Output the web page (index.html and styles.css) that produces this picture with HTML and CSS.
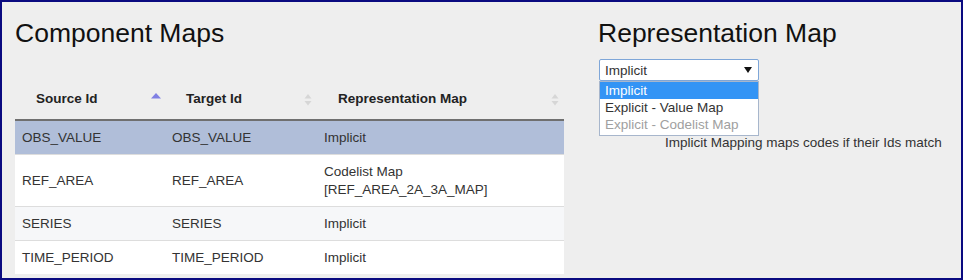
FILE: index.html
```html
<!DOCTYPE html>
<html>
<head>
<meta charset="utf-8">
<link rel="stylesheet" href="styles.css">
</head>
<body>
<div class="frame">
  <section class="left">
    <h2 class="title">Component Maps</h2>
    <table class="maps">
      <colgroup><col class="c1"><col class="c2"><col class="c3"></colgroup>
      <thead>
        <tr>
          <th><div class="th-in"><span>Source Id</span>
            <svg class="sort" width="10" height="14" viewBox="0 0 10 14"><polygon points="0,5.5 5,0 10,5.5" fill="#7f7fe3"/></svg></div></th>
          <th><div class="th-in"><span>Target Id</span>
            <svg class="sort" width="10" height="14" viewBox="0 0 10 14"><polygon points="1.5,5.5 5,1 8.5,5.5" fill="#d6d6d6"/><polygon points="1.5,8 5,12.5 8.5,8" fill="#d6d6d6"/></svg></div></th>
          <th><div class="th-in"><span>Representation Map</span>
            <svg class="sort" width="10" height="14" viewBox="0 0 10 14"><polygon points="1.5,5.5 5,1 8.5,5.5" fill="#d6d6d6"/><polygon points="1.5,8 5,12.5 8.5,8" fill="#d6d6d6"/></svg></div></th>
        </tr>
      </thead>
      <tbody>
        <tr class="selected"><td>OBS_VALUE</td><td>OBS_VALUE</td><td>Implicit</td></tr>
        <tr class="even"><td>REF_AREA</td><td>REF_AREA</td><td>Codelist Map<br>[REF_AREA_2A_3A_MAP]</td></tr>
        <tr class="odd"><td>SERIES</td><td>SERIES</td><td>Implicit</td></tr>
        <tr class="even"><td>TIME_PERIOD</td><td>TIME_PERIOD</td><td>Implicit</td></tr>
      </tbody>
    </table>
  </section>
  <section class="right">
    <h2 class="title">Representation Map</h2>
    <div class="select-wrap">
      <div class="select"><span>Implicit</span><svg class="caret" width="8" height="6" viewBox="0 0 8 6"><polygon points="0,0 8,0 4,6" fill="#111"/></svg></div>
      <ul class="options">
        <li class="opt active">Implicit</li>
        <li class="opt">Explicit - Value Map</li>
        <li class="opt disabled">Explicit - Codelist Map</li>
      </ul>
    </div>
    <p class="hint">Implicit Mapping maps codes if their Ids match</p>
  </section>
</div>
</body>
</html>
```
FILE: styles.css
```css
html, body {
  margin: 0;
  padding: 0;
  background: #eeeeee;
}
body {
  font-family: "Liberation Sans", Arial, sans-serif;
  font-size: 13.5px;
  color: #333;
}
.frame {
  width: 963px;
  height: 280px;
  box-sizing: border-box;
  border: 2px solid #0a0a80;
  background: #eeeeee;
  display: flex;
  gap: 34px;
  padding: 16px 0 0 13px;
  overflow: hidden;
}
.left {
  width: 549px;
  flex: none;
}
.right {
  flex: 1;
}
.title {
  margin: 0;
  font-size: 26.5px;
  font-weight: normal;
  line-height: 30px;
  color: #111;
}
.maps {
  margin-top: 32px;
  width: 549px;
  border-collapse: collapse;
  table-layout: fixed;
}
.c1 { width: 150px; }
.c2 { width: 152px; }
.c3 { width: 247px; }
.maps th {
  text-align: left;
  font-weight: bold;
  color: #222;
  padding: 10px 4px 11px 21px;
  line-height: 18px;
  border-bottom: 2px solid #6f6f6f;
}
.th-in {
  display: flex;
  align-items: center;
  justify-content: space-between;
}
.sort {
  flex: none;
  margin-top: 1px;
}
.maps td {
  padding: 7.5px 7px;
  line-height: 18px;
  vertical-align: middle;
  border-top: 1px solid #dddddd;
  color: #333;
}
.maps tbody tr:first-child td {
  border-top: none;
}
.selected td { background: #b0bed9; }
.even td { background: #ffffff; }
.odd td { background: #f6f7f9; }

.select-wrap {
  position: relative;
  margin: 11px 0 0 1px;
  width: 160px;
}
.select {
  box-sizing: border-box;
  height: 22px;
  width: 160px;
  border: 1px solid #7ea6d8;
  border-radius: 2px;
  background: #fff;
  padding: 0 6px 0 5px;
  display: flex;
  align-items: center;
  justify-content: space-between;
  color: #333;
}
.caret {
  flex: none;
}
.options {
  position: absolute;
  top: 22px;
  left: 0;
  width: 160px;
  box-sizing: border-box;
  margin: 0;
  padding: 0 0 2px 0;
  list-style: none;
  background: #fff;
  border: 1px solid #a7b6cc;
}
.opt {
  line-height: 17px;
  padding-left: 5px;
  color: #333;
}
.opt.active {
  background: #3394f5;
  color: #fff;
}
.opt.disabled {
  color: #a0a0a0;
}
.hint {
  margin: 53px 0 0 0;
  padding-left: 67px;
  line-height: 18px;
  color: #333;
}
```
